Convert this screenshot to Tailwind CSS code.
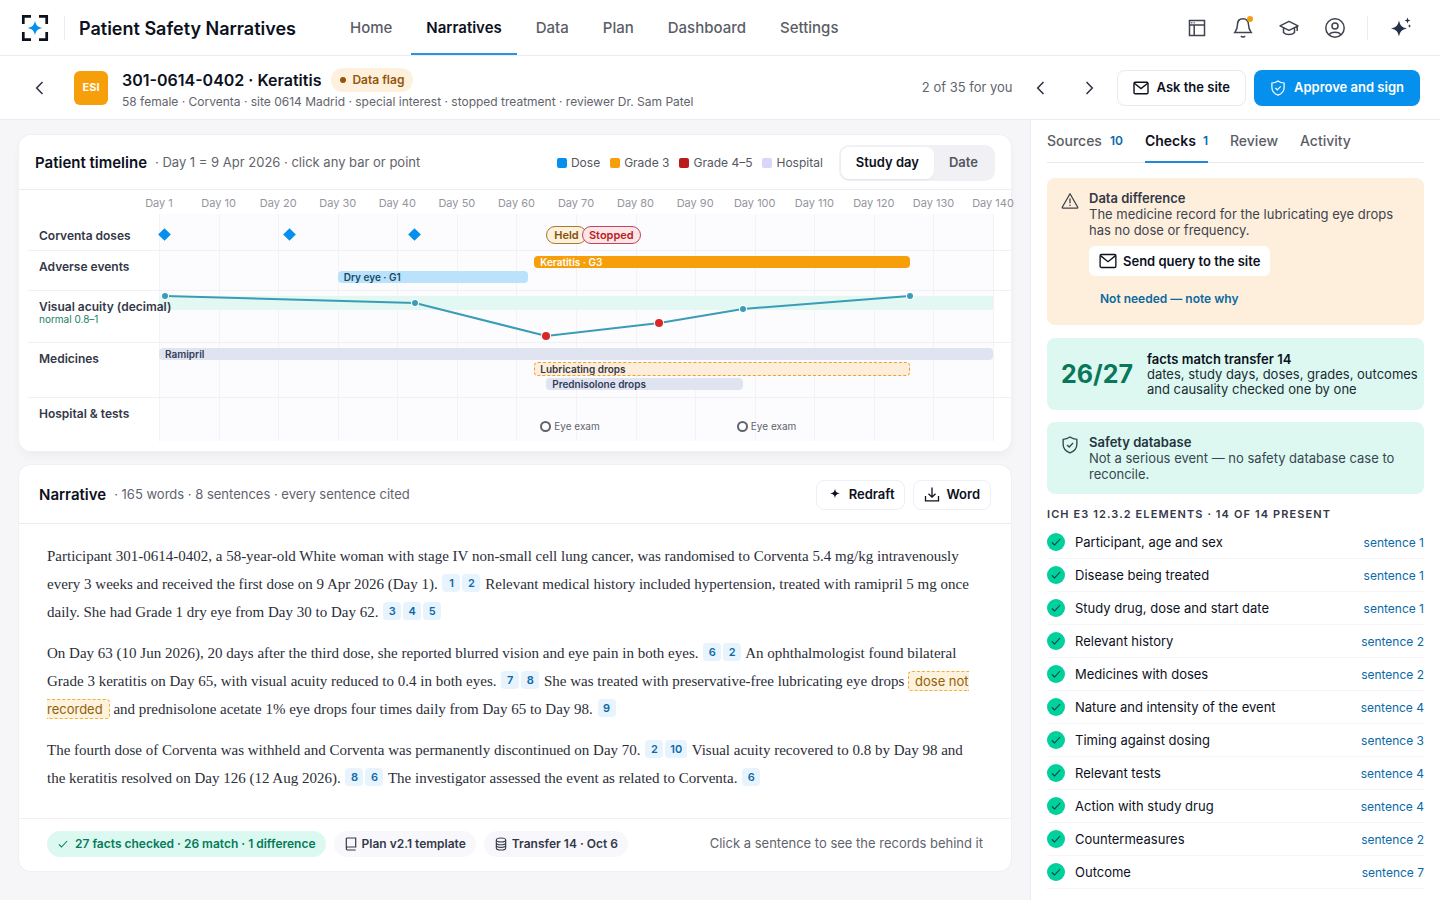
<!DOCTYPE html>
<html lang="en">
	<head>
		<meta charset="UTF-8" />
		<meta name="viewport" content="width=device-width, initial-scale=1.0" />
		<title>Patient Safety Narratives</title>
		<script src="https://cdn.jsdelivr.net/npm/@tailwindcss/browser@4"></script>
	</head>
	<body class="h-screen overflow-hidden flex flex-col bg-white text-[#0c111d] font-['Inter',sans-serif]">
		<!-- icons shared by several controls -->
		<svg class="hidden" aria-hidden="true">
			<symbol id="i-mail" viewBox="0 0 16 16"><rect x="1" y="2.2" width="14" height="11.6" rx="1.2" /><path d="M1.3 3.2 8 8.6l6.700-5.400" /></symbol>
			<symbol id="i-shield" viewBox="0 0 16 16"><path d="M8 .9C6.200 2.200 4.200 2.900 1.900 3v4.400c0 3.700 2.400 6.300 6.100 7.700 3.700-1.400 6.100-4 6.100-7.700V3C11.800 2.900 9.800 2.200 8 .9Z" /><path d="m5.400 8 1.900 1.800 3.400-3.500" /></symbol>
			<symbol id="i-left" viewBox="0 0 16 16"><path d="M10.500 2 4.700 8l5.800 6" /></symbol>
			<symbol id="i-right" viewBox="0 0 16 16"><path d="m5.500 2 5.800 6-5.800 6" /></symbol>
			<symbol id="i-check" viewBox="0 0 16 16"><path d="m2.500 8.600 3.500 3.400 7.500-8" /></symbol>
		</svg>

		<header class="shrink-0 h-14 border-b border-[#ebebf3] flex items-center pl-[21px] pr-7">
			<svg class="w-7 h-7" viewBox="0 0 28 28" fill="none">
				<path d="M2.300 10V2.300H10M18 2.300h7.700V10M25.700 18v7.700H18M10 25.700H2.300V18" stroke="#0c111d" stroke-width="2.700" />
				<path d="M14 6.800c1 4.600 2.600 6.200 7.200 7.200-4.600 1-6.200 2.600-7.200 7.200-1-4.600-2.600-6.200-7.200-7.200 4.600-1 6.200-2.600 7.200-7.200Z" fill="#0690ee" />
			</svg>
			<div class="ml-[15px] h-6 border-l border-[#ebebf3]"></div>
			<h1 class="ml-3.5 pt-0.5 text-lg font-semibold whitespace-nowrap">Patient Safety Narratives</h1>
			<nav class="ml-[39px] h-full pt-0.5 flex gap-1 text-[15px] font-medium text-[#5b5d66]">
				<a href="#" class="px-[15px] flex items-center">Home</a>
				<a href="#" class="px-[15px] flex items-center font-semibold text-[#0c111d] border-b-2 border-[#2c94d8] pt-0.5">Narratives</a>
				<a href="#" class="px-[15px] flex items-center">Data</a>
				<a href="#" class="px-[15px] flex items-center">Plan</a>
				<a href="#" class="px-[15px] flex items-center">Dashboard</a>
				<a href="#" class="px-[15px] flex items-center">Settings</a>
			</nav>
			<div class="ml-auto flex items-center gap-[26px] text-[#3f4350]">
				<button aria-label="Workspace"><svg class="w-5 h-5 block" viewBox="0 0 20 20" fill="none" stroke="currentColor" stroke-width="1.500"><path d="M2.500 2.500h15v15h-15zM2.500 7h15M7.200 7v10.500" /><path d="M4.300 4.800h1M6.600 4.800h1" /></svg></button>
				<button aria-label="Notifications" class="relative">
					<svg class="w-5 h-5 block" viewBox="0 0 20 20" fill="none" stroke="currentColor" stroke-width="1.500"><path d="M10 .8C6.400 .8 4.500 3.200 4.500 6.500c0 4.500-1.200 6-2.700 8h16.400c-1.500-2-2.700-3.500-2.700-8C15.500 3.200 13.600.8 10 .8ZM8 18c.8 1.300 3.200 1.300 4 0" /></svg>
					<span class="absolute -top-0.5 right-0 w-1.5 h-1.5 rounded-full bg-[#f59e0b]"></span>
				</button>
				<button aria-label="Training"><svg class="w-5 h-5 block" viewBox="0 0 20 20" fill="none" stroke="currentColor" stroke-width="1.500" stroke-linejoin="round"><path d="m10 3.300 9 4.500-9 4.500-9-4.500ZM4.500 10v4.500c2.500 2.800 8.500 2.800 11 0V10M18.200 8.500V13" /></svg></button>
				<button aria-label="Account"><svg class="w-5 h-5 block" viewBox="0 0 20 20" fill="none" stroke="currentColor" stroke-width="1.500"><circle cx="10" cy="10" r="9.200" /><circle cx="10" cy="8" r="3" /><path d="M4.300 17c1.200-3.700 10.200-3.700 11.400 0" /></svg></button>
			</div>
			<div class="ml-[22px] mr-[22px] h-6 border-l border-[#ebebf3]"></div>
			<button aria-label="Assistant" class="text-[#25304a]"><svg class="w-[22px] h-[22px] block" viewBox="0 0 22 22" fill="currentColor"><path d="M9 3.500c1.200 5.200 2.700 6.800 8 8-5.300 1.200-6.800 2.800-8 8-1.200-5.200-2.700-6.800-8-8 5.300-1.200 6.800-2.800 8-8ZM17.500.5l.8 2.200 2.200.8-2.200.8-.8 2.200-.8-2.200-2.200-.8 2.200-.8ZM19.500 7.300l.5 1.200 1.200.5-1.200.5-.5 1.200-.5-1.200-1.200-.5 1.200-.5Z" /></svg></button>
		</header>

		<section class="shrink-0 h-16 border-b border-[#ebebf3] flex items-center pl-8 pr-5 whitespace-nowrap">
			<button aria-label="Back" class="text-[#2c3040]"><svg class="w-4 h-4 block" fill="none" stroke="currentColor" stroke-width="1.500"><use href="#i-left" /></svg></button>
			<div class="ml-[26px] w-[34px] h-[34px] rounded-md bg-[#f79e0b] text-white text-[11px] font-bold flex items-center justify-center">ESI</div>
			<div class="ml-3.5 pt-1">
				<div class="flex items-center gap-2.5 h-6">
					<h2 class="text-base font-semibold">301-0614-0402 · Keratitis</h2>
					<span class="h-6 px-[9px] rounded-full bg-[#fdf0dc] text-[#93560b] text-xs font-semibold flex items-center gap-1.5"><span class="w-1.5 h-1.5 rounded-full bg-[#93560b]"></span>Data flag</span>
				</div>
				<p class="text-xs leading-5 text-[#62646d]">58 female · Corventa · site 0614 Madrid · special interest · stopped treatment · reviewer Dr. Sam Patel</p>
			</div>
			<span class="ml-auto text-[13px] text-[#62646d]">2 of 35 for you</span>
			<button aria-label="Previous" class="ml-5 text-[#2c3040]"><svg class="w-4 h-4 block" fill="none" stroke="currentColor" stroke-width="1.500"><use href="#i-left" /></svg></button>
			<button aria-label="Next" class="ml-8 text-[#2c3040]"><svg class="w-4 h-4 block" fill="none" stroke="currentColor" stroke-width="1.500"><use href="#i-right" /></svg></button>
			<button class="ml-5 h-9 px-[15px] rounded-lg border border-[#e8e8f3] text-[13px] font-semibold flex items-center gap-2"><svg class="w-4 h-4" fill="none" stroke="currentColor" stroke-width="1.400"><use href="#i-mail" /></svg>Ask the site</button>
			<button class="ml-2 h-9 px-4 rounded-lg bg-[#0690ee] text-white text-[13px] font-semibold flex items-center gap-2"><svg class="w-4 h-4" fill="none" stroke="currentColor" stroke-width="1.200"><use href="#i-shield" /></svg>Approve and sign</button>
		</section>

		<div class="flex-1 min-h-0 flex">
			<main class="flex-1 min-w-0 bg-[#f6f6f9] px-[19px] pt-[15px] flex flex-col gap-3.5 overflow-hidden">
				<section class="bg-white rounded-xl shadow-[0_0_0_1px_#efeff4,0_5px_10px_rgba(20,20,40,0.04)] pb-2.5">
					<div class="h-[55px] border-b border-[#ebebf1] px-4 pt-0.5 flex items-center whitespace-nowrap">
						<h2 class="text-[15px] font-semibold">Patient timeline</h2>
						<span class="ml-2 text-[13px] text-[#62646d]">· Day 1 = 9 Apr 2026 · click any bar or point</span>
						<ul class="ml-auto flex items-center gap-2.5 text-xs text-[#55575f]">
							<li class="flex items-center gap-1"><span class="w-2.5 h-2.5 rounded-xs bg-[#0690ee]"></span>Dose</li>
							<li class="flex items-center gap-1"><span class="w-2.5 h-2.5 rounded-xs bg-[#f79e0b]"></span>Grade 3</li>
							<li class="flex items-center gap-1"><span class="w-2.5 h-2.5 rounded-xs bg-[#b91c1c]"></span>Grade 4–5</li>
							<li class="flex items-center gap-1"><span class="w-2.5 h-2.5 rounded-xs bg-[#dad5fa]"></span>Hospital</li>
						</ul>
						<div class="ml-4 h-9 p-0.5 rounded-[10px] bg-[#f1f1f5] flex text-[13px] font-semibold">
							<button class="px-[15px] rounded-lg bg-white shadow-xs">Study day</button>
							<button class="px-[15px] rounded-lg text-[#55575f]">Date</button>
						</div>
					</div>
					<div class="relative pl-[9px]">
						<div class="absolute top-6 bottom-0 left-[140px] right-[18px] bg-[#fcfcfe]" id="grid"></div>
						<div class="relative ml-[131px] mr-[18px] h-[29px] text-[11px] text-[#94959d]" id="axis"></div>
						<div id="lanes" class="relative"></div>
					</div>
				</section>

				<section class="bg-white rounded-xl shadow-[0_0_0_1px_#efeff4]">
					<div class="h-[59px] border-b border-[#ebebf1] px-5 pt-0.5 flex items-center whitespace-nowrap">
						<h2 class="text-[15px] font-semibold">Narrative</h2>
						<span class="ml-2 text-[13px] text-[#62646d]">· 165 words · 8 sentences · every sentence cited</span>
						<button class="ml-auto h-[30px] px-2.5 rounded-lg border border-[#eeeef8] text-[13px] font-semibold flex items-center gap-1.5"><svg class="w-4 h-4" viewBox="0 0 16 16" fill="currentColor"><path d="M8 1.500c.5 3.300 1.400 4.200 4.700 4.900C9.400 7.100 8.500 8 8 11.300 7.500 8 6.600 7.100 3.300 6.400 6.600 5.700 7.500 4.800 8 1.500Z" /></svg>Redraft</button>
						<button class="ml-2 h-[30px] px-2.5 rounded-lg border border-[#eeeef8] text-[13px] font-semibold flex items-center gap-1.5"><svg class="w-4 h-4" viewBox="0 0 16 16" fill="none" stroke="currentColor" stroke-width="1.300"><path d="M8 .5v9.500M4.500 6.700 8 10.200l3.500-3.500M1.500 9v4.800h13V9" /></svg>Word</button>
					</div>
					<div id="narrative" class="pl-7 pr-8 pt-[18px] pb-[26px] space-y-[13px] font-['Liberation_Serif',serif] text-[15px] leading-7 text-[#2b2e38]"></div>
					<div class="border-t border-[#f1f1f5] px-7 pt-3 pb-3.5 flex items-center gap-2 text-xs font-semibold text-[#343848] whitespace-nowrap">
						<span class="h-[26px] px-2.5 rounded-full bg-[#dcf9f1] text-[#067a59] flex items-center gap-1.5"><svg class="w-3 h-3" fill="none" stroke="currentColor" stroke-width="1.400"><use href="#i-check" /></svg>27 facts checked · 26 match · 1 difference</span>
						<span class="h-[26px] px-2.5 rounded-full bg-[#f8f8fc] flex items-center gap-1"><svg class="w-3.5 h-3.5" viewBox="0 0 14 14" fill="none" stroke="currentColor" stroke-width="1.200"><path d="M2.300 11V2C2.300 1.300 2.700 1 3.300 1H11.700V10H3.500C1.900 10 1.900 13 3.500 13H11.700" /></svg>Plan v2.1 template</span>
						<span class="h-[26px] px-2.5 rounded-full bg-[#f8f8fc] flex items-center gap-1"><svg class="w-3.5 h-3.5" viewBox="0 0 14 14" fill="none" stroke="currentColor" stroke-width="1.100"><ellipse cx="7" cy="3" rx="4.700" ry="2" /><path d="M2.300 3v8c0 2.700 9.400 2.700 9.400 0V3M2.300 5.700c0 2.700 9.400 2.700 9.400 0M2.300 8.300c0 2.700 9.400 2.700 9.400 0" /></svg>Transfer 14 · Oct 6</span>
						<span class="ml-auto text-[13px] font-normal text-[#62646d]">Click a sentence to see the records behind it</span>
					</div>
				</section>
			</main>

			<aside class="w-[410px] shrink-0 border-l border-[#ebebf3] px-4 overflow-hidden">
				<nav class="h-[43px] border-b border-[#e6e8ee] flex text-sm font-medium text-[#5b5d66] whitespace-nowrap">
					<a href="#" class="flex items-center gap-2">Sources <span class="text-xs font-semibold text-[#0b69a8]">10</span></a>
					<a href="#" class="ml-[22px] -mb-px border-b-2 border-[#2089dc] flex items-center gap-[7px] font-semibold text-[#0c111d]">Checks <span class="text-xs text-[#0b69a8]">1</span></a>
					<a href="#" class="ml-[22px] flex items-center">Review</a>
					<a href="#" class="ml-[22px] flex items-center">Activity</a>
				</nav>

				<div class="mt-[15px] rounded-lg bg-[#fdefdb] px-3.5 pt-3 pb-[13px] flex gap-2.5 text-[13px] leading-4 text-[#3f4350]">
					<svg class="w-[18px] h-[18px] mt-0.5 shrink-0" viewBox="0 0 18 18" fill="none" stroke="currentColor" stroke-width="1.300" stroke-linejoin="round"><path d="M9 1.800 16.600 15c.3.700 0 1.200-.7 1.200H2.100c-.7 0-1-.5-.7-1.200ZM9 6.500v4.800M9 12.700V14" /></svg>
					<div>
						<h3 class="font-semibold text-[#343848]">Data difference</h3>
						<p>The medicine record for the lubricating eye drops has no dose or frequency.</p>
						<button class="mt-2 h-[30px] px-2.5 rounded-md bg-white text-[13px] font-semibold text-[#0c111d] flex items-center gap-1.5"><svg class="w-[18px] h-[18px]" fill="none" stroke="currentColor" stroke-width="1.200"><use href="#i-mail" /></svg>Send query to the site</button>
						<button class="mt-2.5 h-[26px] px-[11px] text-xs font-semibold text-[#0b69a0] block">Not needed — note why</button>
					</div>
				</div>

				<div class="mt-[13px] h-[72px] rounded-lg bg-[#dcf8f1] pl-3.5 pr-1 flex items-center gap-3.5 text-[13px] leading-[15px]">
					<strong class="text-[25px] font-bold text-[#08775a]">26/27</strong>
					<p class="text-[#1b2b33]"><b class="font-semibold text-[#0c111d]">facts match transfer 14</b><br>dates, study days, doses, grades, outcomes and causality checked one by one</p>
				</div>

				<div class="mt-3 rounded-lg bg-[#dcf8f1] p-3 pl-3.5 flex gap-2.5 text-[13px] leading-4 text-[#37464f]">
					<svg class="w-[18px] h-[18px] mt-0.5 shrink-0" fill="none" stroke="currentColor" stroke-width="1.200"><use href="#i-shield" /></svg>
					<div>
						<h3 class="font-semibold text-[#26343f]">Safety database</h3>
						<p>Not a serious event — no safety database case to reconcile.</p>
					</div>
				</div>

				<h3 class="mt-3 text-[11px] leading-4 font-semibold tracking-widest uppercase text-[#343848]">ICH E3 12.3.2 elements · 14 of 14 present</h3>
				<ul id="elements" class="mt-1"></ul>
			</aside>
		</div>

		<script>
			const LAST_DAY = 140
			const pct = day => (day / LAST_DAY) * 100

			// axis labels and vertical grid lines
			const axis = document.getElementById('axis')
			const grid = document.getElementById('grid')
			for (let day = 0; day <= LAST_DAY; day += 10) {
				axis.innerHTML += `<span class="absolute top-[5px] leading-4 -translate-x-1/2 whitespace-nowrap" style="left:${pct(day)}%">Day ${day || 1}</span>`
				grid.innerHTML += `<span class="absolute inset-y-0 w-px bg-[#f3f3f7]" style="left:${pct(day)}%"></span>`
			}

			const bar = (from, to, label, cls) =>
				`<button class="absolute rounded-sm text-left whitespace-nowrap text-[10px] font-semibold flex items-center ${cls}" style="left:${pct(from)}%;width:${pct(to - from)}%">${label}</button>`

			const dose = day =>
				`<button aria-label="Dose on day ${day}" class="absolute top-[11px] w-[9px] h-[9px] -ml-[5px] rotate-45 bg-[#0690ee]" style="left:${pct(day)}%"></button>`

			const exam = day =>
				`<button class="absolute top-[21px] -ml-1.5 h-4 flex items-center gap-[3px] whitespace-nowrap text-[10px] text-[#62646d]" style="left:${pct(day)}%"><span class="w-[11px] h-[11px] rounded-full border-2 border-[#62646d] bg-white"></span>Eye exam</button>`

			// [day, decimal acuity]
			const acuity = [[1, 1], [43, 0.9], [65, 0.4], [84, 0.6], [98, 0.8], [126, 1]]
			const acuityY = v => Math.round(6 + ((1 - v) / 0.6) * 40)
			const acuityLine = `
				<div class="absolute inset-x-0 top-1.5 h-3.5 bg-[#e3f8f3]"></div>
				<svg class="absolute inset-0 w-full h-full" viewBox="0 0 140 52" preserveAspectRatio="none" fill="none">
					<polyline points="${acuity.map(([d, v]) => `${d},${acuityY(v)}`).join(' ')}" stroke="#3b9cb8" stroke-width="2" vector-effect="non-scaling-stroke" />
				</svg>
				${acuity.map(([d, v]) => `<button aria-label="Day ${d}: ${v}" class="absolute -translate-1/2 rounded-full ring-1 ring-white ${v < 0.8 ? 'w-2 h-2 bg-[#dc2626]' : 'w-1.5 h-1.5 bg-[#3b9cb8]'}" style="left:${pct(d)}%;top:${acuityY(v)}px"></button>`).join('')}`

			const lanes = [
				{ label: 'Corventa doses', height: 'h-[31px]', items: [
					dose(1), dose(22), dose(43),
					`<button class="absolute top-[7px] h-[18px] px-[7px] rounded-full border border-[#a87a2a] bg-[#fdf0dc] text-[#84500b] text-[11px] font-semibold flex items-center" style="left:${pct(65)}%">Held</button>`,
					`<button class="absolute top-[7px] h-[18px] px-1.5 rounded-full border border-[#c2455a] bg-[#fde6e8] text-[#b91c1c] text-[11px] font-semibold flex items-center" style="left:${pct(71)}%">Stopped</button>`,
				] },
				{ label: 'Adverse events', height: 'h-10', items: [
					bar(63, 126, 'Keratitis · G3', 'px-1.5 top-1.5 h-3 bg-[#f79e0b] text-white'),
					bar(30, 62, 'Dry eye · G1', 'px-1.5 top-[21px] h-3 bg-[#bae3fb] text-[#174a68]'),
				] },
				{ label: 'Visual acuity (decimal)', note: 'normal 0.8–1', height: 'h-[52px]', items: [acuityLine] },
				{ label: 'Medicines', height: 'h-[55px]', items: [
					bar(0, 140, 'Ramipril', 'px-1.5 top-1.5 h-3 bg-[#dfe4f0] text-[#343c58]'),
					bar(63, 126, 'Lubricating drops', 'px-[5px] top-5 h-3.5 bg-[#fdeedb] border border-dashed border-[#f0a030] text-[#343848]'),
					bar(65, 98, 'Prednisolone drops', 'px-1.5 top-9 h-3 bg-[#dfe4f0] text-[#343c58]'),
				] },
				{ label: 'Hospital &amp; tests', height: 'h-11', items: [exam(65), exam(98)] },
			]

			document.getElementById('lanes').innerHTML = lanes.map((lane, i) => `
				<div class="relative flex ${lane.height} ${i < lanes.length - 1 ? 'shadow-[0_1px_0_#f1f1f5]' : ''}">
					<div class="relative z-10 w-[131px] shrink-0 pl-[11px] pt-[9px] whitespace-nowrap text-xs leading-4 font-semibold text-[#343848]">
						${lane.label}
						${lane.note ? `<div class="text-[10px] leading-2 font-normal text-[#15805f]">${lane.note}</div>` : ''}
					</div>
					<div class="relative flex-1 mr-[18px]">${lane.items.join('')}</div>
				</div>`).join('')

			// numbers in square brackets become citation chips
			const paragraphs = [
				'Participant 301-0614-0402, a 58-year-old White woman with stage IV non-small cell lung cancer, was randomised to Corventa 5.4 mg/kg intravenously every 3 weeks and received the first dose on 9 Apr 2026 (Day 1). [1][2] Relevant medical history included hypertension, treated with ramipril 5 mg once daily. She had Grade 1 dry eye from Day 30 to Day 62. [3][4][5]',
				'On Day 63 (10 Jun 2026), 20 days after the third dose, she reported blurred vision and eye pain in both eyes. [6][2] An ophthalmologist found bilateral Grade 3 keratitis on Day 65, with visual acuity reduced to 0.4 in both eyes. [7][8] She was treated with preservative-free lubricating eye drops {dose not recorded} and prednisolone acetate 1% eye drops four times daily from Day 65 to Day 98. [9]',
				'The fourth dose of Corventa was withheld and Corventa was permanently discontinued on Day 70. [2][10] Visual acuity recovered to 0.8 by Day 98 and the keratitis resolved on Day 126 (12 Aug 2026). [8][6] The investigator assessed the event as related to Corventa. [6]',
			]
			document.getElementById('narrative').innerHTML = paragraphs.map(text => `<p>${text
				.replace(/\[(\d+)\]/g, `<button class="mx-px h-[18px] min-w-[18px] px-[5px] rounded-sm bg-[#e8f4fd] text-[#0b69a8] font-['Inter',sans-serif] text-[11px] leading-[18px] font-semibold align-[2px]">$1</button>`)
				.replace(/\{(.+?)\}/g, `<mark class="px-1.5 py-px rounded-sm border border-dashed border-[#f0b040] bg-[#fdf3dd] text-[#93600b] font-['Inter',sans-serif] text-[13px]">$1</mark>`)}</p>`).join('')

			const elements = [
				['Participant, age and sex', 1],
				['Disease being treated', 1],
				['Study drug, dose and start date', 1],
				['Relevant history', 2],
				['Medicines with doses', 2],
				['Nature and intensity of the event', 4],
				['Timing against dosing', 3],
				['Relevant tests', 4],
				['Action with study drug', 4],
				['Countermeasures', 2],
				['Outcome', 7],
			]
			document.getElementById('elements').innerHTML = elements.map(([name, n]) => `
				<li class="h-[33px] border-b border-[#f3f3f8] flex items-center text-[13px]">
					<span class="w-[18px] h-[18px] rounded-full bg-[#00d09c] text-[#0c3b3a] flex items-center justify-center"><svg class="w-3 h-3" fill="none" stroke="currentColor" stroke-width="1.400"><use href="#i-check" /></svg></span>
					<span class="ml-2.5 pt-0.5">${name}</span>
					<a href="#" class="ml-auto pt-0.5 text-xs text-[#0b69a8]">sentence ${n}</a>
				</li>`).join('')
		</script>
	</body>
</html>
